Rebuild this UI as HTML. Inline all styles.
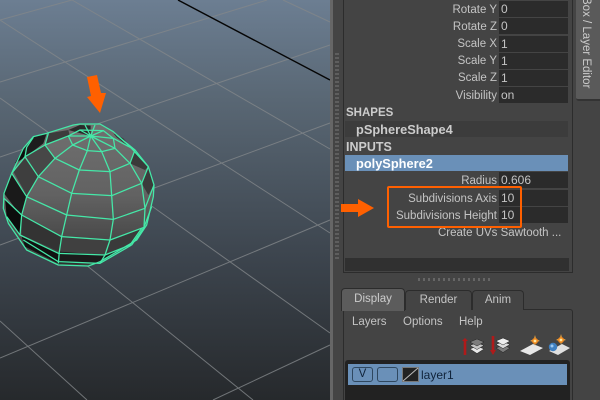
<!DOCTYPE html>
<html><head><meta charset="utf-8">
<style>
html,body{margin:0;padding:0}
#p{position:relative;width:600px;height:400px;overflow:hidden;background:#444;font:11.5px "Liberation Sans",sans-serif;color:#c4c4c4}
#p div{position:absolute;box-sizing:border-box;white-space:nowrap}
.l{left:345px;width:152px;text-align:right;height:16px;line-height:16px}
.f{left:499px;width:69px;height:16px;background:#2b2b2b;line-height:17px;padding-left:2px;font-size:12px}
.b{font-weight:bold;color:#ccc}
.tab{background:#444;border:1px solid #2c2c2c;border-bottom:none;border-radius:4px 4px 0 0;text-align:center;line-height:22px}
</style></head><body><div id="p">
<svg style="position:absolute;left:0;top:0" width="600" height="400" viewBox="0 0 600 400">
<defs><linearGradient id="bg" x1="0" y1="0" x2="0" y2="1">
<stop offset="0" stop-color="#6c7e92"/><stop offset=".25" stop-color="#596774"/><stop offset=".65" stop-color="#3c444d"/><stop offset="1" stop-color="#26292c"/></linearGradient>
<linearGradient id="sp" x1="0" y1="0" x2="0" y2="1"><stop offset="0" stop-color="#707070"/><stop offset=".5" stop-color="#626262"/><stop offset=".75" stop-color="#4e4e4e"/><stop offset="1" stop-color="#3a3a3a"/></linearGradient></defs>
<rect width="330" height="400" fill="url(#bg)"/>
<g stroke="#83878a" stroke-width="1" fill="none" opacity=".8">
<path d="M0 20L72 0M0 82L267 0M0 157L330 45M0 245L330 123M0 358L330 220M213 400L330 345"/>
<path d="M0 20L330 233M72 0L330 149M283 0L330 22M0 98L330 333M80 260L253 400M0 321L87 400"/>
</g>
<path d="M178 0L330 80" stroke="#050505" stroke-width="1.4"/>
<g transform="translate(0 60) scale(.33333)">
<path d="M240 192L300 192L340 215L390 260L445 320L462 375L460 410L440 495L410 540L300 605L265 618L175 615L80 570L25 490L10 445L12 400L35 340L70 265L100 230L140 220L220 195Z" fill="url(#sp)"/>
<path d="M65 275L100 230L140 220L130 250L78 290Z" fill="#1d1d1d"/>
<path d="M45 310L70 265L78 290Z" fill="#0c0c0c"/>
<path d="M145 220L205 210L210 230L135 252Z" fill="#3c3c3c"/>
<path d="M75 290L135 255L165 295L115 350Z" fill="#474747"/>
<path d="M40 335L75 295L115 350L80 405Z" fill="#3e3e3e"/>
<path d="M35 340L80 405L65 470L12 400Z" fill="#1a1a1a"/>
<path d="M15 415L65 465L60 525L20 470Z" fill="#0c0c0c"/>
<path d="M65 465L185 530L178 575L65 525Z" fill="#333"/>
<path d="M65 530L175 580L175 610L75 560Z" fill="#111"/>
<path d="M185 530L330 540L315 585L178 575Z" fill="#404040"/>
<path d="M178 575L315 585L300 610L175 610Z" fill="#1c1c1c"/>
<path d="M330 540L432 502L395 550L315 585Z" fill="#3a3a3a"/>
<path d="M315 585L395 550L300 605Z" fill="#1a1a1a"/>
<path d="M390 310L405 270L445 320L435 330Z" fill="#3a3a3a"/>
<path d="M425 370L445 320L462 375L445 405Z" fill="#3b3b3b"/>
<path d="M340 220L370 235L400 270L350 232Z" fill="#333"/>
<path d="M205 210L240 195L272 197L272 228Z" fill="#2a2a2a"/>
<g fill="none" stroke="#45e8a8" stroke-width="3.8" stroke-linejoin="round">
<path d="M240 192L300 192L340 215L390 260L445 320L462 375L460 410L440 495L410 540L300 605L265 618L175 615L80 570L25 490L10 445L12 400L35 340L70 265L100 230L140 220L220 195Z"/>
<path d="M272 228L218 255M272 228L262 272M272 228L305 275M272 228L345 265M272 228L340 235M272 228L310 212M272 228L240 210M272 228L205 228M272 228L285 195M272 228L255 195"/>
<path d="M205 228L218 255L262 272L305 275L345 265L340 235L310 212L240 210Z"/>
<path d="M145 220L135 255L165 295L238 330L330 335L390 310L405 270L350 225M205 228L135 255M340 235L405 270"/>
<path d="M75 290L115 350L215 400L335 407L425 370L445 320M135 255L75 290M405 270L445 320"/>
<path d="M35 340L80 410L200 465L340 478L435 445L462 375"/>
<path d="M12 415L65 465L185 530L330 540L432 502L455 440"/>
<path d="M20 470L60 525L175 580L315 585L390 555L425 505"/>
<path d="M70 540L175 605L300 610L395 555"/>
<path d="M218 255L165 295L115 350L80 410L65 465L60 525"/>
<path d="M262 272L238 330L215 400L200 465L185 530L178 575L175 610"/>
<path d="M305 275L330 335L335 407L340 478L330 540L315 585L300 610"/>
<path d="M345 265L390 310L425 370L435 445L432 502L395 555"/>
<path d="M35 340L75 290L80 262L100 232"/>
</g>
</g>
</svg>
<div style="left:330px;top:0;width:3px;height:400px;background:#666"></div>
<div style="left:335px;top:53px;width:4px;height:208px;background:repeating-linear-gradient(#5e5e5e 0 2px,transparent 2px 4px)"></div>
<div style="left:343px;top:-2px;width:230px;height:275px;border:1px solid #2c2c2c;background:#444"></div>
<div class="l" style="top:2px">Rotate Y</div><div class="f" style="top:1px">0</div>
<div class="l" style="top:19px">Rotate Z</div><div class="f" style="top:18px">0</div>
<div class="l" style="top:36px">Scale X</div><div class="f" style="top:36px">1</div>
<div class="l" style="top:53px">Scale Y</div><div class="f" style="top:53px">1</div>
<div class="l" style="top:70px">Scale Z</div><div class="f" style="top:70px">1</div>
<div class="l" style="top:88px">Visibility</div><div class="f" style="top:87px">on</div>
<div class="b" style="left:346px;top:105px;line-height:16px;font-size:11.5px">SHAPES</div>
<div style="left:345px;top:121px;width:223px;height:16px;background:#3c3c3c"></div>
<div class="b" style="left:356px;top:121px;line-height:17px;font-size:12.8px">pSphereShape4</div>
<div class="b" style="left:346px;top:139px;line-height:16px;font-size:12.5px">INPUTS</div>
<div class="b" style="left:345px;top:155px;width:223px;height:16px;background:#6a90b8;color:#fff;padding-left:11px;line-height:17px;font-size:12.8px">polySphere2</div>
<div class="l" style="top:173px">Radius</div><div class="f" style="top:172px">0.606</div>
<div class="f" style="top:190px"></div><div class="f" style="top:207px"></div>
<div class="l" style="top:191px">Subdivisions Axis</div><div class="f" style="top:190px;background:none">10</div>
<div class="l" style="top:208px">Subdivisions Height</div><div class="f" style="top:207px;background:none">10</div>
<div style="left:438px;top:225px;line-height:16px">Create UVs Sawtooth ...</div>
<div style="left:345px;top:258px;width:224px;height:13px;background:#303030"></div>
<div style="left:387px;top:186px;width:135px;height:42px;border:2px solid #ff6000;border-radius:2px"></div>
<div style="left:418px;top:278px;width:74px;height:3px;background:repeating-linear-gradient(90deg,#666 0 2px,transparent 2px 5px)"></div>
<div style="left:576px;top:-4px;width:24px;height:105px;background:#5a5a5a;border-radius:0 0 0 3px;border-bottom:2px solid #333"></div>
<div style="left:578px;top:-4px;width:16px;height:92px;writing-mode:vertical-rl;line-height:16px;text-align:right;color:#ccc">Box / Layer Editor</div>
<div style="left:343px;top:309px;width:230px;height:95px;border:1px solid #2c2c2c;border-radius:3px;background:#444"></div>
<div class="tab" style="left:405px;top:290px;width:67px;height:20px;line-height:19px">Render</div>
<div class="tab" style="left:472px;top:290px;width:52px;height:20px;line-height:19px">Anim</div>
<div class="tab" style="left:341px;top:288px;width:64px;height:23px;background:#5c5c5c;color:#ccc;line-height:20px">Display</div>
<div style="left:352px;top:314px;line-height:16px">Layers</div>
<div style="left:403px;top:314px;line-height:16px">Options</div>
<div style="left:459px;top:314px;line-height:16px">Help</div>
<svg style="position:absolute;left:460px;top:330px" width="110" height="30" viewBox="0 0 110 30">
<path d="M5 8L8 11H6.3V25H3.7V11H2Z" fill="#b01a1a"/>
<path d="M3.7 6H6.3V20" fill="none"/>
<path d="M31.7 6H34.3V20H36L33 25L30 20H31.7Z" fill="#b01a1a"/>
<g stroke="#222" stroke-width=".5">
<path d="M10 19L17 16L24 19L17 23.5Z" fill="#e8e8e8"/><path d="M10 15.5L17 12.5L24 15.5L17 19.5Z" fill="#c4c4c4"/><path d="M10 12L17 9L24 12L17 16Z" fill="#7c7c7c"/>
<path d="M36 18L43 15L50 18L43 22.5Z" fill="#7c7c7c"/><path d="M36 14.5L43 11.5L50 14.5L43 18.5Z" fill="#ddd"/><path d="M36 11L43 8L50 11L43 15Z" fill="#eee"/></g>
<path d="M60 21L73 14L83 18L70 25Z" fill="#e8e8e8"/>
<path d="M75 5L76 9L80 11L76 12L75 16L74 12L70 11L74 9Z" fill="#ffb040"/><circle cx="75" cy="11" r="3" fill="#f08a20"/><circle cx="75" cy="11" r="1.4" fill="#ffe9a0"/>
<path d="M89 21L102 14L110 18L98 25Z" fill="#e0e0e0"/><circle cx="93" cy="17" r="4.2" fill="#3f7fc0"/><circle cx="92" cy="16" r="1.5" fill="#9cc8f0"/>
<path d="M101 4L102 8L106 10L102 11L101 15L100 11L96 10L100 8Z" fill="#ffb040"/><circle cx="101" cy="10" r="3" fill="#f08a20"/><circle cx="101" cy="10" r="1.4" fill="#ffe9a0"/>
</svg>
<div style="left:345px;top:360px;width:225px;height:40px;background:#222;border-radius:3px 3px 0 0"></div>
<div style="left:348px;top:364px;width:219px;height:21px;background:#6a90b8"></div>
<div style="left:352px;top:367px;width:21px;height:15px;border:1px solid #2f4860;border-radius:3px;background:#6a90b8;color:#10233a;text-align:center;line-height:13px">V</div>
<div style="left:377px;top:367px;width:21px;height:15px;border:1px solid #2f4860;border-radius:3px;background:#6a90b8"></div>
<div style="left:402px;top:367px;width:17px;height:15px;background:#222;border:1px solid #777"></div>
<svg style="position:absolute;left:402px;top:367px" width="17" height="15"><path d="M1 14L16 1" stroke="#bbb"/></svg>
<div style="left:421px;top:367px;line-height:16px;color:#10233a;font-size:12px">layer1</div>
<svg style="position:absolute;left:0;top:0" width="600" height="400" viewBox="0 0 600 400">
<path d="M87 77L97 75L101 93L106 93L100 113L87 97L91 96Z" fill="#ff6000"/>
<path d="M341 204H358V199L374 208L358 217V212H341Z" fill="#ff6000"/>
</svg>
</div></body></html>
